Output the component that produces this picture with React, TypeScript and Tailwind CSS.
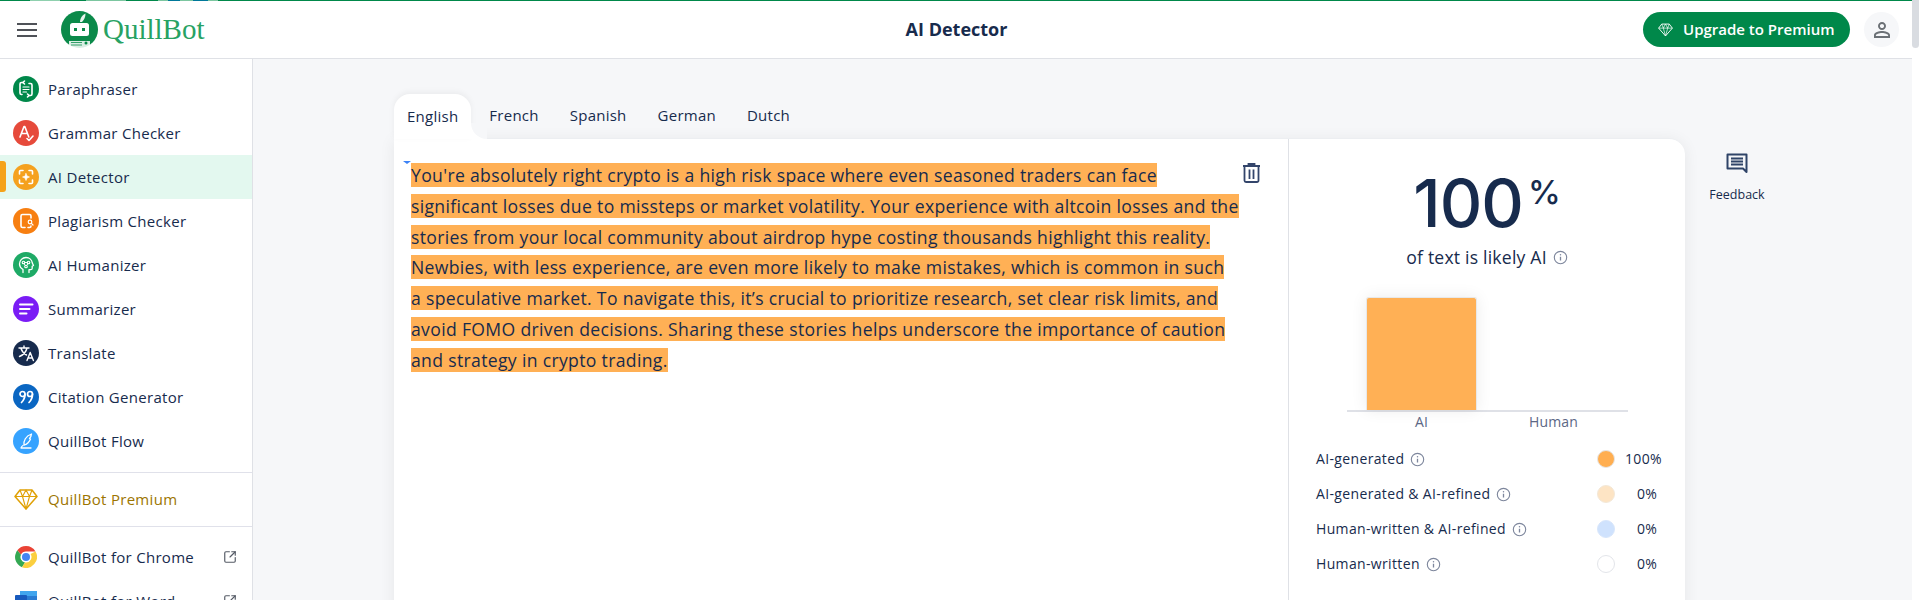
import { SquareArrowOutUpRight } from 'lucide-react';

const navItems = [
  { label: 'Paraphraser', bg: 'bg-[#00884a]', icon: 'paraphrase' },
  { label: 'Grammar Checker', bg: 'bg-[#e64a3b]', icon: 'grammar' },
  { label: 'AI Detector', bg: 'bg-[#f5a11e]', icon: 'detector', active: true },
  { label: 'Plagiarism Checker', bg: 'bg-[#f77f11]', icon: 'plagiarism' },
  { label: 'AI Humanizer', bg: 'bg-[#1eaa66]', icon: 'humanizer' },
  { label: 'Summarizer', bg: 'bg-[#7a1cf5]', icon: 'summarizer' },
  { label: 'Translate', bg: 'bg-[#172b4d]', icon: 'translate' },
  { label: 'Citation Generator', bg: 'bg-[#0a66c2]', icon: 'citation' },
  { label: 'QuillBot Flow', bg: 'bg-[#36a3ff]', icon: 'flow' },
];

const languages = ['English', 'French', 'Spanish', 'German', 'Dutch'];

const legend = [
  { label: 'AI-generated', dot: 'bg-[#ffae50] border-[#e6e6e6]', value: '100%', valueClass: 'ml-[10px]' },
  { label: 'AI-generated & AI-refined', dot: 'bg-[#fde4c4] border-[#f3e8d8]', value: '0%', valueClass: 'ml-[22px]' },
  { label: 'Human-written & AI-refined', dot: 'bg-[#cfe2fd] border-[#d8e6fb]', value: '0%', valueClass: 'ml-[22px]' },
  { label: 'Human-written', dot: 'bg-white border-[#e3e5ea]', value: '0%', valueClass: 'ml-[22px]' },
];

function NavGlyph({ name }: { name: string }) {
  const common = { fill: 'none', stroke: 'white', strokeWidth: 1.6, strokeLinecap: 'round' as const, strokeLinejoin: 'round' as const };
  return (
    <svg viewBox="0 0 26 26" className="w-[26px] h-[26px]" {...common}>
      {name === 'paraphrase' && (
        <>
          <path d="M10 6.500H8.500a1.500 1.500 0 0 0-1.500 1.500v9a1.500 1.500 0 0 0 1.500 1.500H9" />
          <path d="M16 7.500h1.500A1.500 1.500 0 0 1 19 9v9a1.500 1.500 0 0 1-1.500 1.500H16" />
          <path d="M11.500 5l-1.600 1.500 1.600 1.500M14.500 18l1.600 1.500-1.600 1.500" />
          <path d="M10 11h6M10 13.500h6M10 16h3.500" strokeWidth="1.200" />
        </>
      )}
      {name === 'grammar' && (
        <>
          <path d="M7 17l4-10.500h.8l4 10.500M8.500 13.500h6" />
          <path d="M14 18.500l2 2 4-4.500" />
        </>
      )}
      {name === 'detector' && (
        <>
          <path d="M6.500 10V7.500a1 1 0 0 1 1-1H10M16 6.500h2.500a1 1 0 0 1 1 1V10M19.500 16v2.500a1 1 0 0 1-1 1H16M10 19.500H7.500a1 1 0 0 1-1-1V16" />
          <path d="M13 9.500l1 2.500 2.500 1-2.500 1-1 2.500-1-2.500-2.500-1 2.500-1z" fill="white" strokeWidth="0.600" />
        </>
      )}
      {name === 'plagiarism' && (
        <>
          <path d="M18 10V8a1.500 1.500 0 0 0-1.500-1.500h-7A1.500 1.500 0 0 0 8 8v10a1.500 1.500 0 0 0 1.500 1.500H12" />
          <circle cx="17" cy="14" r="1.800" strokeWidth="1.200" />
          <path d="M18.400 15.400l1.600 1.600" strokeWidth="1.200" />
          <path d="M15 19.500h1.500a1.500 1.500 0 0 0 1.500-1.500" />
        </>
      )}
      {name === 'humanizer' && (
        <>
          <path d="M10 20.500v-3c-2-1.200-3.500-3-3.500-5.500A6.500 6.500 0 0 1 13 5.500c3.500 0 6 2.500 6.300 5.500l1.200 2.500-1.300.7v2a1.500 1.500 0 0 1-1.500 1.500h-1.700v2.800" strokeWidth="1.300" />
          <circle cx="10.500" cy="10.500" r="1.300" strokeWidth="1.100" />
          <circle cx="15.500" cy="10.500" r="1.300" strokeWidth="1.100" />
          <circle cx="13" cy="14.500" r="1.300" strokeWidth="1.100" />
          <path d="M11.800 10.500h2.400M11 11.800l1.400 1.600M15 11.800l-1.400 1.600" strokeWidth="1" />
        </>
      )}
      {name === 'summarizer' && <path d="M7 8.500h12.500M7 13h9.500M7 17.500h6.500" strokeWidth="2" />}
      {name === 'translate' && (
        <>
          <path d="M6 8h10M11 6v2M14 8c-.8 3.500-3.800 7-7.500 8.500M8 8.500c1 3 3.500 5.500 5.500 6.500" strokeWidth="1.400" />
          <path d="M14 20.500l3.200-8 3.200 8M15.200 18h4" strokeWidth="1.400" />
        </>
      )}
      {name === 'citation' && (
        <g strokeWidth="1.700">
          <circle cx="9.500" cy="10" r="2.500" />
          <path d="M12 10c0 3.500-1 6-3.500 8.500" />
          <circle cx="17" cy="10" r="2.500" />
          <path d="M19.500 10c0 3.500-1 6-3.500 8.500" />
        </g>
      )}
      {name === 'flow' && (
        <>
          <path d="M11 17c-.5-4 1.500-9 7.500-11-.2 2-1 3.500-2 4.500l1 .5c-1 2.500-3 5-6 6" strokeWidth="1.300" />
          <path d="M8 20h10M10 17.500c-1 .5-1.500 1-2 2.500" strokeWidth="1.300" />
        </>
      )}
    </svg>
  );
}

function InfoIcon({ className }: { className: string }) {
  return (
    <svg viewBox="0 0 16 16" className={className} fill="none" stroke="#7d869c" strokeWidth="1.200">
      <circle cx="8" cy="8" r="6.600" />
      <path d="M8 7.200v4" strokeWidth="1.400" />
      <circle cx="8" cy="5" r="0.800" fill="#7d869c" stroke="none" />
    </svg>
  );
}

function Logo() {
  return (
    <svg viewBox="0 0 37 37" className="w-[37px] h-[37px]">
      <circle cx="18.500" cy="18.500" r="18.500" fill="#0b8a4a" />
      <path d="M19 11c0-3.500 2-7 5.500-8.500 0 3-1 6-3.500 8.500z" fill="#ffffff" fillOpacity="0.900" />
      <rect x="9" y="12" width="19" height="13" rx="2.500" fill="#ffffff" />
      <rect x="13" y="17" width="3" height="3" fill="#0b8a4a" />
      <rect x="21" y="17" width="3" height="3" fill="#0b8a4a" />
      <path d="M8 37v-7h21v7z" fill="#ffffff" fillOpacity="0.850" />
      <path d="M10 31.500h11M10 34h11" stroke="#0b8a4a" strokeWidth="0.800" />
      <circle cx="25" cy="32" r="1.500" fill="#0b8a4a" />
    </svg>
  );
}

function Diamond({ className, stroke }: { className: string; stroke: string }) {
  return (
    <svg viewBox="0 0 24 22" className={className} fill="none" stroke={stroke} strokeWidth="1.500" strokeLinejoin="round">
      <path d="M6 1.500h12l5 6.500-11 12.500L1 8z" />
      <path d="M1 8h22M6 1.500L8.500 8 12 1.500 15.500 8 18 1.500M8.500 8L12 20.500 15.500 8" strokeWidth="1.100" />
    </svg>
  );
}

function ChromeIcon() {
  return (
    <svg viewBox="0 0 22 22" className="w-[22px] h-[22px]">
      <path d="M11 0a11 11 0 0 1 9.500 5.500H11a5.500 5.500 0 0 0-5 3.200L2.300 4.300A11 11 0 0 1 11 0z" fill="#ea4335" />
      <path d="M2.300 4.300L6 8.700a5.500 5.500 0 0 0 4 7.800L7 21.200A11 11 0 0 1 2.300 4.300z" fill="#34a853" />
      <path d="M20.500 5.500A11 11 0 0 1 7 21.200l3-4.700a5.500 5.500 0 0 0 5.500-8.500z" fill="#fbcf3f" />
      <circle cx="11" cy="11" r="5" fill="#ffffff" />
      <circle cx="11" cy="11" r="4" fill="#4285f4" />
    </svg>
  );
}

function WordIcon() {
  return (
    <svg viewBox="0 0 22 22" className="w-[22px] h-[22px]">
      <rect x="5" y="1" width="17" height="20" rx="1.500" fill="#2b7cd3" />
      <rect x="5" y="1" width="17" height="5" fill="#41a5ee" />
      <rect x="0" y="5" width="12" height="12" rx="1" fill="#185abd" />
    </svg>
  );
}

function Sidebar() {
  return (
    <aside className="w-[253px] shrink-0 border-r border-[#dfe1e6] bg-white pt-2 text-[15px] font-medium text-[#172b4d] tracking-[0.3px]">
      {navItems.map((item) => (
        <div key={item.label} className={`relative flex h-11 items-center gap-[9px] pl-[13px] ${item.active ? 'bg-[#e3f8ef]' : ''}`}>
          {item.active && <span className="absolute left-0 top-[6px] h-[31px] w-[6px] rounded-r-[3px] bg-[#f5a21a]" />}
          <span className={`flex h-[26px] w-[26px] shrink-0 items-center justify-center rounded-full ${item.bg}`}>
            <NavGlyph name={item.icon} />
          </span>
          <span className="pt-px">{item.label}</span>
        </div>
      ))}
      <div className="mt-[9px] flex h-[55px] items-center gap-[10px] border-y border-[#e0e1ea] pl-[14px] text-[#9c7500]">
        <Diamond className="h-[23px] w-[24px] shrink-0" stroke="#e0a106" />
        <span>QuillBot Premium</span>
      </div>
      <div className="mt-2">
        {[
          { label: 'QuillBot for Chrome', icon: <ChromeIcon /> },
          { label: 'QuillBot for Word', icon: <WordIcon /> },
        ].map((item) => (
          <div key={item.label} className="flex h-11 items-center pl-[15px] pr-[15px]">
            {item.icon}
            <span className="ml-[11px] flex-1">{item.label}</span>
            <SquareArrowOutUpRight className="h-[14px] w-[14px] text-[#555b66]" strokeWidth={2} />
          </div>
        ))}
      </div>
    </aside>
  );
}

function Tabs() {
  return (
    <div className="relative z-10 flex h-11 gap-[5px]">
      {languages.map((lang, i) => (
        <div
          key={lang}
          className={`relative flex items-center px-[13px] pb-px text-[15px] font-medium tracking-[0.25px] text-[#172b4d] ${
            i === 0 ? 'h-[45px] rounded-t-[16px] bg-white shadow-[0_-2px_6px_rgba(0,0,0,0.05)]' : 'h-11'
          }`}
        >
          {lang}
          {i === 0 && (
            <span className="absolute bottom-0 left-full h-4 w-4 bg-white">
              <span className="block h-4 w-4 rounded-bl-[16px] bg-[#f6f7f9]" />
            </span>
          )}
        </div>
      ))}
    </div>
  );
}

function ResultPanel() {
  return (
    <div className="w-[396px] shrink-0 pt-[31px] text-[#172b4d]">
      <div className="flex justify-center font-['Inter',sans-serif] font-medium leading-none">
        <span className="text-[66px] leading-[66px] tracking-[-1px]">100</span>
        <span className="ml-[5px] mt-[6px] text-[33px] leading-[33px]">%</span>
      </div>
      <div className="mt-[10px] flex items-center justify-center gap-[6px] text-[17.600px] leading-[22px] tracking-[0.2px]">
        of text is likely AI
        <InfoIcon className="h-[15px] w-[15px]" />
      </div>
      <div className="ml-[58px] mt-[29px] w-[281px]">
        <div className="h-[115px] border-b-2 border-[#dfe1e7] pl-[19px]">
          <div className="h-[113px] w-[111px] rounded-t-[3px] border-x border-t border-[#e8e8e8] bg-[#ffb055] shadow-[0_0_16px_rgba(0,0,0,0.08)]" />
        </div>
        <div className="flex pl-[19px] text-[14px] leading-[20px] tracking-[0.2px] text-[#5c6785]">
          <div className="w-[111px] text-center">AI</div>
          <div className="ml-[21px] w-[111px] text-center">Human</div>
        </div>
      </div>
      <div className="mt-[16px] flex flex-col gap-[13px] pl-[27px] text-[14px] leading-[22px] tracking-[0.35px]">
        {legend.map((row) => (
          <div key={row.label} className="flex h-[22px] items-center">
            <span className="flex w-[281px] items-center gap-[6px]">
              {row.label}
              <InfoIcon className="h-[15px] w-[15px]" />
            </span>
            <span className={`h-[18px] w-[18px] rounded-full border ${row.dot}`} />
            <span className={row.valueClass}>{row.value}</span>
          </div>
        ))}
      </div>
    </div>
  );
}

export default function App() {
  return (
    <div className="flex h-[600px] w-full overflow-hidden bg-white font-['Open_Sans',sans-serif]">
      <div className="flex min-w-0 flex-1 flex-col">
        <div className="flex h-px shrink-0 bg-[#00884a]">
          <span className="ml-[30px] w-[30px] bg-[#8fd0ae]" />
          <span className="ml-[26px] w-[40px] bg-[#7cc6a0]" />
          <span className="ml-[32px] w-[10px] bg-[#7cc6a0]" />
          <span className="w-[12px] bg-[#00789a]" />
          <span className="w-[13px] bg-[#7cc6a0]" />
          <span className="w-[15px] bg-[#00789a]" />
          <span className="w-[10px] bg-[#7cc6a0]" />
        </div>

        <header className="flex h-[58px] shrink-0 items-center border-b border-[#dfe1e6] bg-white">
          <div className="flex flex-1 items-center">
            <div className="ml-[17px] flex w-[20px] flex-col gap-[4px]">
              <span className="h-[2px] bg-[#4f5258]" />
              <span className="h-[2px] bg-[#4f5258]" />
              <span className="h-[2px] bg-[#4f5258]" />
            </div>
            <div className="ml-[24px]">
              <Logo />
            </div>
            <span className="ml-[5px] font-['Liberation_Serif',serif] text-[29px] leading-none text-[#27a263]">QuillBot</span>
          </div>
          <div className="ml-[14px] text-[18px] font-bold text-[#172b4d]">AI Detector</div>
          <div className="flex flex-1 items-center justify-end pr-[13px]">
            <button className="flex h-[35px] w-[207px] items-center rounded-full bg-[#00884a] pl-[15px] text-[15px] font-semibold text-white">
              <Diamond className="h-[14px] w-[15px]" stroke="#ffffff" />
              <span className="ml-[10px]">Upgrade to Premium</span>
            </button>
            <div className="ml-[14px] flex h-[35px] w-[35px] items-center justify-center rounded-full bg-[#f6f7f9]">
              <svg viewBox="0 0 24 24" className="h-[24px] w-[24px]" fill="#6b7075">
                <path d="M12 5.900c1.160 0 2.100.940 2.100 2.100s-.940 2.100-2.100 2.100S9.900 9.160 9.900 8s.940-2.100 2.100-2.100m0 9c2.970 0 6.100 1.460 6.100 2.100v1.100H5.900V17c0-.640 3.130-2.100 6.100-2.100M12 4C9.790 4 8 5.790 8 8s1.790 4 4 4 4-1.790 4-4-1.790-4-4-4zm0 9c-2.670 0-8 1.340-8 4v3h16v-3c0-2.660-5.330-4-8-4z" />
              </svg>
            </div>
          </div>
        </header>

        <div className="flex min-h-0 flex-1">
          <Sidebar />
          <main className="flex min-w-0 flex-1 bg-[#f6f7f9] pl-[141px] pt-[35px]">
            <div className="w-[1291px] shrink-0">
              <Tabs />
              <div className="flex h-[600px] rounded-tr-[16px] border-t border-[#eceef1] bg-white shadow-[0_2px_16px_rgba(0,0,0,0.07)]">
                <div className="relative flex-1 border-r border-[#dfe1e6] pl-[17px] pt-[21px]">
                  <span className="absolute left-[9px] top-[22px] h-0 w-0 border-x-[4px] border-t-[3px] border-x-transparent border-t-[#3b82f6]" />
                  <p className="w-[834px] text-[17.600px] leading-[30.800px] tracking-[0.33px] text-[#172b4d]">
                    <span className="bg-[#ffb055]">
                      You're absolutely right crypto is a high risk space where even seasoned traders can face significant losses due to missteps or market volatility. Your experience with altcoin losses and the stories from your local community about airdrop hype costing thousands highlight this reality. Newbies, with less experience, are even more likely to make mistakes, which is common in such{' '}
                      <br />
                      a speculative market. To navigate this, it’s crucial to prioritize research, set clear risk limits, and avoid FOMO driven decisions. Sharing these stories helps underscore the importance of caution and strategy in crypto trading.
                    </span>
                  </p>
                  <svg viewBox="0 0 17 20" className="absolute left-[849px] top-[24px] h-[20px] w-[17px]" fill="none" stroke="#33456b" strokeWidth="1.800">
                    <path d="M0 3h17M5.500 3V1h6v2" />
                    <path d="M1.500 3.500V17.500a1.500 1.500 0 0 0 1.500 1.500h11a1.500 1.500 0 0 0 1.500-1.500V3.500" />
                    <path d="M6.500 6.500v9.500M10.500 6.500v9.500" />
                  </svg>
                </div>
                <ResultPanel />
              </div>
            </div>
            <div className="ml-[24px] flex w-[56px] flex-col items-center pt-[57px] text-[12.500px] text-[#172b4d]">
              <svg viewBox="0 0 24 24" className="h-[24px] w-[24px]" fill="none" stroke="#2f4468" strokeWidth="2">
                <path d="M2.500 3.500h19v17.500l-3.500-3.500h-15.500z" strokeLinejoin="round" />
                <path d="M6 7.500h12M6 10.500h12M6 13.500h12" strokeWidth="1.800" />
              </svg>
              <span className="mt-[11px] leading-[18px]">Feedback</span>
            </div>
          </main>
        </div>
      </div>
      <div className="w-[7px] shrink-0 bg-white">
        <div className="h-[48px] rounded-b-[4px] bg-[#d9dce1]" />
      </div>
    </div>
  );
}
